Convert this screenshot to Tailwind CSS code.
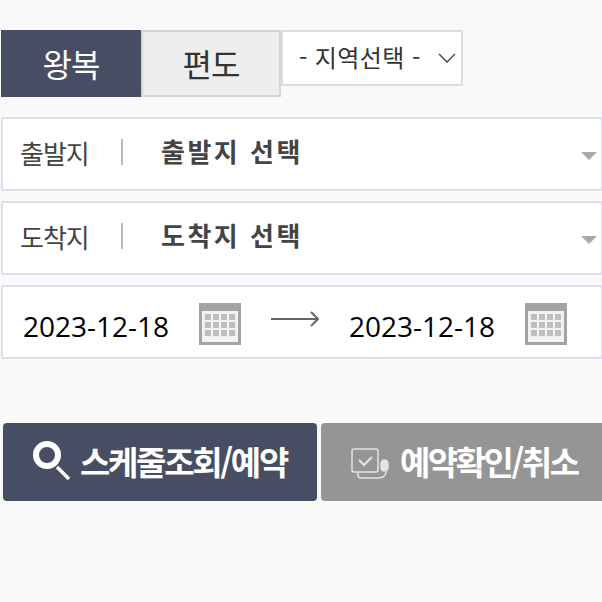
<!DOCTYPE html>
<html lang="ko">
  <head>
    <meta charset="utf-8" />
    <meta name="viewport" content="width=device-width, initial-scale=1.0" />
    <title>스케줄조회</title>
    <script src="https://cdn.jsdelivr.net/npm/@tailwindcss/browser@4"></script>
  </head>
  <body class="bg-[#f9f9f9] w-[602px] h-[602px] overflow-hidden font-['Noto_Sans_CJK_KR',sans-serif]">
    <div class="pt-[30px] pl-px">
      <!-- Trip type tabs -->
      <div class="flex items-start h-[67px]">
        <div class="w-[140px] h-[67px] bg-[#474e63] text-white text-[32px] tracking-[-1px] flex items-center justify-center pb-[2px]">왕복</div>
        <div class="w-[140px] h-[67px] bg-[#eeeeee] border-2 border-[#d5d5d5] text-[#333] text-[32px] tracking-[-1px] flex items-center justify-center pb-[2px]">편도</div>
        <div class="w-[182px] h-[56px] bg-white border-2 border-[#dddddd] text-[#333] text-[24px] tracking-[0.4px] flex items-center pl-[16px]">
          <span class="whitespace-nowrap mb-[3px]">- 지역선택 -</span>
          <svg class="ml-[17px]" width="18" height="10" viewBox="0 0 18 10" fill="none" stroke="#444" stroke-width="1.4"><path d="M1 1l8 8 8-8" /></svg>
        </div>
      </div>

      <!-- Route rows -->
      <div class="mt-[20px] flex flex-col gap-[10px] w-[602px]">
        <div class="h-[74px] bg-white border-2 border-[#dce1ee] flex items-center pl-[17px]">
          <span class="w-[70px] text-[26px] text-[#444] tracking-[-1px] mb-[4px]">출발지</span>
          <span class="ml-[31px] w-[2px] h-[26px] mb-[4px] bg-[#bbb]"></span>
          <span class="ml-[38px] text-[26px] font-bold text-[#444] tracking-[2.5px] mb-[8px]">출발지 선택</span>
          <svg class="ml-auto mr-[4px] mt-[3px]" width="16" height="8" viewBox="0 0 16 8"><path d="M0 0h16l-8 8z" fill="#aaa" /></svg>
        </div>
        <div class="h-[74px] bg-white border-2 border-[#dce1ee] flex items-center pl-[17px]">
          <span class="w-[70px] text-[26px] text-[#444] tracking-[-1px] mb-[4px]">도착지</span>
          <span class="ml-[31px] w-[2px] h-[26px] mb-[4px] bg-[#bbb]"></span>
          <span class="ml-[38px] text-[26px] font-bold text-[#444] tracking-[2.5px] mb-[8px]">도착지 선택</span>
          <svg class="ml-auto mr-[4px] mt-[3px]" width="16" height="8" viewBox="0 0 16 8"><path d="M0 0h16l-8 8z" fill="#aaa" /></svg>
        </div>

        <!-- Dates -->
        <div class="h-[74px] bg-white border-2 border-[#dce1ee] flex items-center pl-[20px] font-['Open_Sans',sans-serif] text-[28px] text-black">
          <span class="w-[145px] mt-[8px] leading-none whitespace-nowrap">2023-12-18</span>
          <svg class="ml-[31px] mt-[4px]" width="42" height="42" viewBox="0 0 42 42">
            <rect width="42" height="42" fill="#a3a3a3" />
            <rect x="3" y="8" width="36" height="31" fill="#f2f2f2" />
            <path d="M6 11h6v6h-6zM14 11h6v6h-6zM22 11h6v6h-6zM30 11h6v6h-6zM6 19h6v6h-6zM14 19h6v6h-6zM22 19h6v6h-6zM30 19h6v6h-6zM6 27h6v6h-6zM14 27h6v6h-6zM22 27h6v6h-6zM30 27h6v6h-6z" fill="#bdbdbd" />
          </svg>
          <svg class="ml-[30px] mb-[6px]" width="48" height="16" viewBox="0 0 48 16" fill="none" stroke="#666" stroke-width="2"><path d="M0 8h47M40 1l7 7-7 7" /></svg>
          <span class="ml-[30px] w-[145px] mt-[8px] leading-none whitespace-nowrap">2023-12-18</span>
          <svg class="ml-[31px] mt-[4px]" width="42" height="42" viewBox="0 0 42 42">
            <rect width="42" height="42" fill="#a3a3a3" />
            <rect x="3" y="8" width="36" height="31" fill="#f2f2f2" />
            <path d="M6 11h6v6h-6zM14 11h6v6h-6zM22 11h6v6h-6zM30 11h6v6h-6zM6 19h6v6h-6zM14 19h6v6h-6zM22 19h6v6h-6zM30 19h6v6h-6zM6 27h6v6h-6zM14 27h6v6h-6zM22 27h6v6h-6zM30 27h6v6h-6z" fill="#bdbdbd" />
          </svg>
        </div>
      </div>

      <!-- Action buttons -->
      <div class="mt-[64px] ml-[2px] flex gap-[4px] w-[620px]">
        <div class="w-[314px] h-[78px] rounded-[4px] bg-[#474e63] text-white text-[33px] font-bold tracking-[-2.3px] flex items-center pl-[30px]">
          <svg class="blur-[0.7px]" width="38" height="44" viewBox="0 0 38 44" fill="none" stroke="#fff"><circle cx="14" cy="15" r="11" stroke-width="6" /><path d="M24 27l12 12" stroke-width="3.5" /></svg>
          <span class="ml-[9px] whitespace-nowrap">스케줄조회/예약</span>
        </div>
        <div class="w-[300px] h-[78px] rounded-[4px] bg-[#959595] text-white text-[33px] font-bold tracking-[-2.5px] flex items-center pl-[30px]">
          <svg class="mt-[3px]" width="38" height="32" viewBox="0 0 38 32" fill="none" stroke="#e4e4e4" stroke-width="1.5">
            <rect x="1" y="1" width="26" height="23" rx="2" />
            <path d="M8 12l5 5 8-8" stroke-width="2" />
            <path d="M7 24v3q0 3 3 3h17q8 0 8-7" />
            <rect x="30" y="12" width="7" height="11" rx="3.5" fill="#e4e4e4" />
          </svg>
          <span class="ml-[11px] whitespace-nowrap">예약확인/취소</span>
        </div>
      </div>
    </div>
  </body>
</html>
